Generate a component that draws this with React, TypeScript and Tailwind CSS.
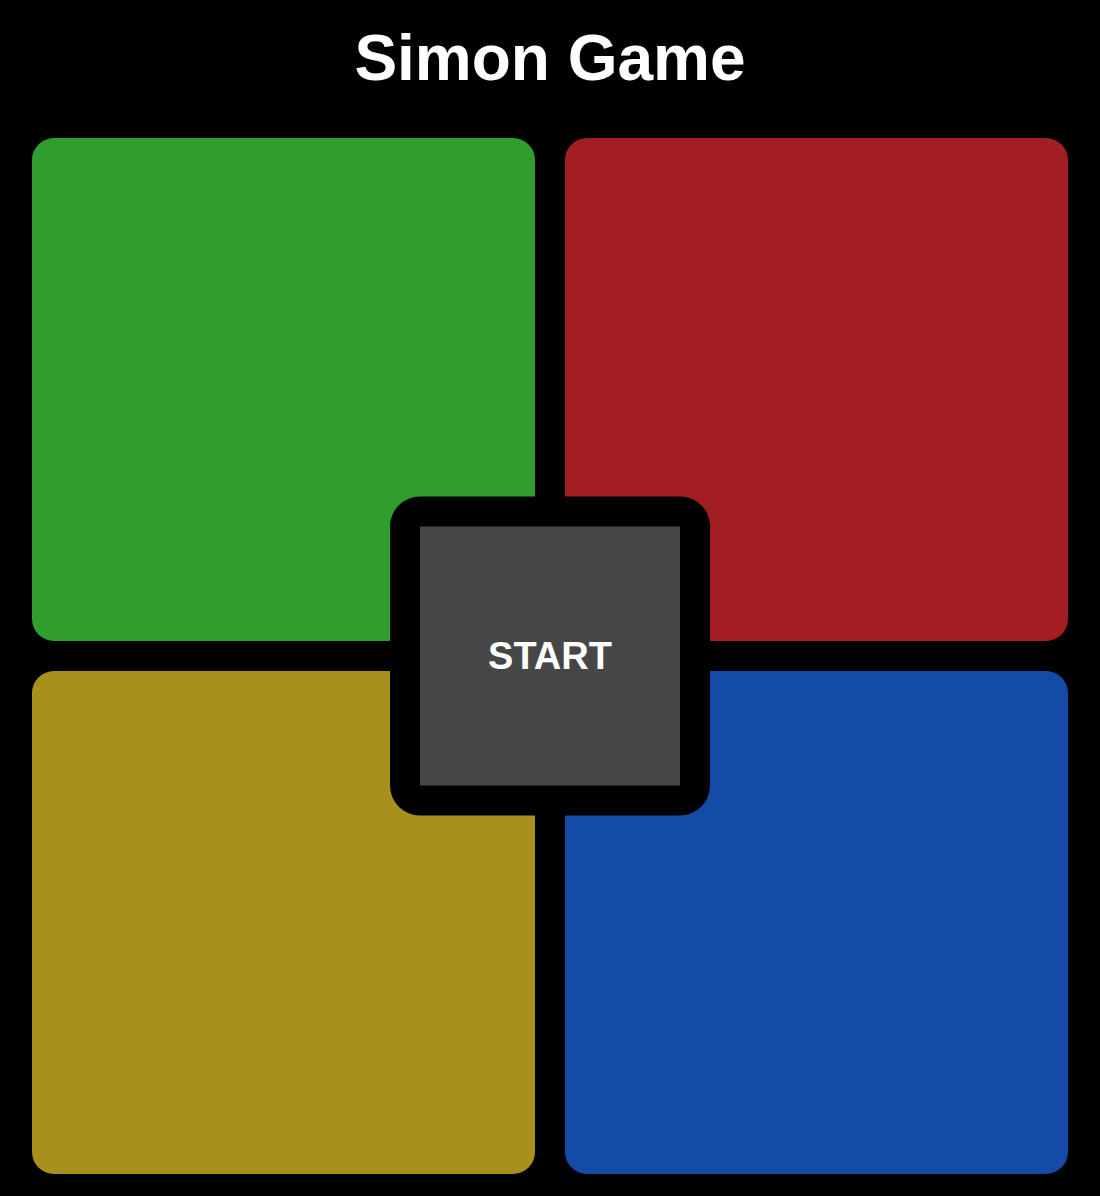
export default function App() {
  const pads = [
    { name: "green", color: "bg-[#2f9e2f]" },
    { name: "red", color: "bg-[#a31e23]" },
    { name: "yellow", color: "bg-[#a8901f]" },
    { name: "blue", color: "bg-[#144ba6]" },
  ];

  return (
    <div className="min-h-screen bg-black font-['Liberation_Sans',Arial,sans-serif] text-white">
      <h1 className="pt-[26px] h-[90px] text-center text-[64px] font-bold leading-none">Simon Game</h1>

      <div className="relative mx-[32px] mt-[48px] grid grid-cols-2 gap-[30px]">
        {pads.map((pad) => (
          <div key={pad.name} className={`aspect-square rounded-[22px] ${pad.color}`} />
        ))}

        <div className="absolute left-1/2 top-1/2 h-[319px] w-[320px] -translate-x-1/2 -translate-y-1/2 rounded-[30px] bg-black p-[30px]">
          <button className="flex h-full w-full items-center justify-center bg-[#464646] text-[38px] font-bold text-white">
            START
          </button>
        </div>
      </div>
    </div>
  );
}
